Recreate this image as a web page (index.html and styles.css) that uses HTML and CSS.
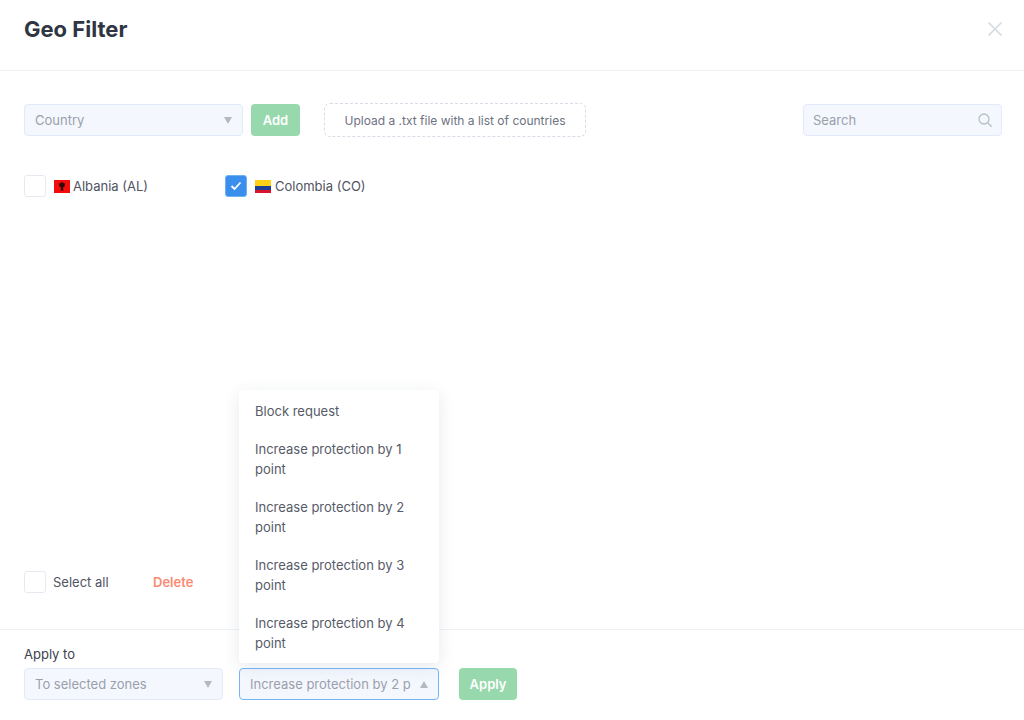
FILE: index.html
```html
<!DOCTYPE html>
<html lang="en">
<head>
  <meta charset="UTF-8" />
  <title>Geo Filter</title>
  <link rel="stylesheet" href="styles.css">
</head>
<body>
  <header class="modal-header">
    <h1>Geo Filter</h1>
    <svg class="close-icon" width="16" height="16" viewBox="0 0 16 16"><path d="M1.500 1.500l13 13M14.500 1.500l-13 13" stroke="#d3d7df" stroke-width="1.500" fill="none"/></svg>
  </header>

  <main class="modal-body">
    <div class="toolbar">
      <div class="select select-country">
        <span>Country</span>
        <i class="arrow"></i>
      </div>
      <button class="btn btn-add">Add</button>
      <div class="upload">Upload a .txt file with a list of countries</div>
      <div class="search">
        <span>Search</span>
        <svg width="16" height="16" viewBox="0 0 16 16"><circle cx="7" cy="7" r="5" stroke="#b9bec9" stroke-width="1.300" fill="none"/><path d="M10.700 10.700l4 4" stroke="#b9bec9" stroke-width="1.300" fill="none"/></svg>
      </div>
    </div>

    <div class="countries">
      <label class="country">
        <span class="checkbox"></span>
        <span class="flag flag-al"><svg width="8" height="10" viewBox="0 0 8 9"><path d="M4 0l1 1.500 2 .5-.5 3L5 6l.5 3h-3L3 6 1.500 5 1 2l2-.5z" fill="#2b0a0a"/></svg></span>
        <span>Albania (AL)</span>
      </label>
      <label class="country">
        <span class="checkbox checked"><svg width="12" height="10" viewBox="0 0 12 10"><path d="M1.500 5l3 3 6-6.500" stroke="#fff" stroke-width="1.800" fill="none"/></svg></span>
        <span class="flag flag-co"></span>
        <span>Colombia (CO)</span>
      </label>
    </div>

    <div class="bulk">
      <label class="select-all">
        <span class="checkbox"></span>
        <span>Select all</span>
      </label>
      <a class="delete">Delete</a>
    </div>
  </main>

  <footer class="modal-footer">
    <div class="apply-label">Apply to</div>
    <div class="apply-row">
      <div class="select select-zones">
        <span>To selected zones</span>
        <i class="arrow"></i>
      </div>
      <div class="select select-action open">
        <span>Increase protection by 2 p</span>
        <i class="arrow arrow-up"></i>
        <ul class="dropdown">
          <li>Block request</li>
          <li>Increase protection by 1 point</li>
          <li>Increase protection by 2 point</li>
          <li>Increase protection by 3 point</li>
          <li>Increase protection by 4 point</li>
        </ul>
      </div>
      <button class="btn btn-apply">Apply</button>
    </div>
  </footer>
</body>
</html>
```

FILE: styles.css
```css
* {
  box-sizing: border-box;
}

html, body {
  height: 720px;
}

body {
  margin: 0;
  display: flex;
  flex-direction: column;
  font-family: Inter, 'Liberation Sans', sans-serif;
  font-size: 13px;
  color: #4f5461;
  background: white;
  overflow: hidden;
}

.modal-header {
  height: 71px;
  padding: 0 21px 0 24px;
  display: flex;
  align-items: center;
  justify-content: space-between;
  border-bottom: 1px solid #f0f1f4;
}

.modal-header h1 {
  margin: 0 0 12px;
  font-size: 22px;
  font-weight: 700;
  color: #2f3541;
}

.close-icon {
  margin-bottom: 13px;
}

.modal-body {
  flex: 1;
  padding: 32px 22px 0 24px;
  display: flex;
  flex-direction: column;
}

.toolbar {
  display: flex;
  align-items: center;
  height: 34px;
}

.select, .search {
  position: relative;
  height: 32px;
  display: flex;
  align-items: center;
  justify-content: space-between;
  padding: 0 10px;
  background: #f4f7fe;
  border: 1px solid #e1e9fb;
  border-radius: 4px;
  color: #9a9fab;
}

.arrow {
  width: 0;
  height: 0;
  flex: none;
  border-left: 4px solid transparent;
  border-right: 4px solid transparent;
  border-top: 7px solid #b4b8c2;
}

.arrow-up {
  border-top: none;
  border-bottom: 7px solid #b4b8c2;
}

.select-country {
  width: 219px;
}

.btn {
  height: 32px;
  border: none;
  border-radius: 4px;
  background: #97d8ad;
  color: white;
  font-family: inherit;
  font-size: 13px;
  font-weight: 600;
  padding: 0;
}

.btn-add {
  width: 49px;
  margin-left: 8px;
}

.upload {
  width: 262px;
  height: 34px;
  margin-left: 24px;
  display: flex;
  align-items: center;
  justify-content: center;
  border: 1px dashed #d9dbe6;
  border-radius: 6px;
  font-size: 12px;
  color: #6d7280;
}

.search {
  width: 199px;
  margin-left: auto;
  padding: 0 8px 0 9px;
}

.countries {
  margin-top: 38px;
  display: flex;
}

.country {
  width: 201px;
  display: flex;
  align-items: center;
}

.checkbox {
  width: 22px;
  height: 22px;
  flex: none;
  display: flex;
  align-items: center;
  justify-content: center;
  background: white;
  border: 1px solid #e6e9f1;
  border-radius: 3px;
}

.checkbox.checked {
  background: #3b8fec;
  border-color: #6fb0f3;
}

.flag {
  width: 16px;
  height: 13px;
  margin: 0 3px 0 8px;
  flex: none;
  display: flex;
  align-items: center;
  justify-content: center;
}

.flag-al {
  background: #f40c0c;
}

.flag-co {
  margin-right: 4px;
  background: linear-gradient(#fcd116 50%, #1d3f94 50%, #1d3f94 75%, #d8152c 75%);
}

.bulk {
  margin-top: auto;
  margin-bottom: 36px;
  display: flex;
  align-items: center;
}

.select-all {
  display: flex;
  align-items: center;
  gap: 7px;
  width: 129px;
}

.delete {
  color: #fb8a72;
  font-weight: 600;
}

.modal-footer {
  height: 91px;
  padding: 16px 24px 0;
  border-top: 1px solid #f0f1f4;
}

.apply-label {
  height: 22px;
  line-height: 17px;
  color: #3d424e;
}

.apply-row {
  display: flex;
  align-items: center;
}

.select-zones {
  width: 199px;
}

.select-action {
  width: 200px;
  margin-left: 16px;
  border-color: #74b7f7;
}

.btn-apply {
  width: 58px;
  margin-left: 20px;
}

.dropdown {
  position: absolute;
  left: -1px;
  bottom: 36px;
  width: 200px;
  margin: 0;
  padding: 11px 15px 10px 16px;
  list-style: none;
  background: white;
  border-radius: 4px;
  box-shadow: 0 4px 16px rgba(60, 70, 110, 0.12);
  color: #565b68;
  line-height: 20px;
}

.dropdown li + li {
  margin-top: 18px;
}
```
